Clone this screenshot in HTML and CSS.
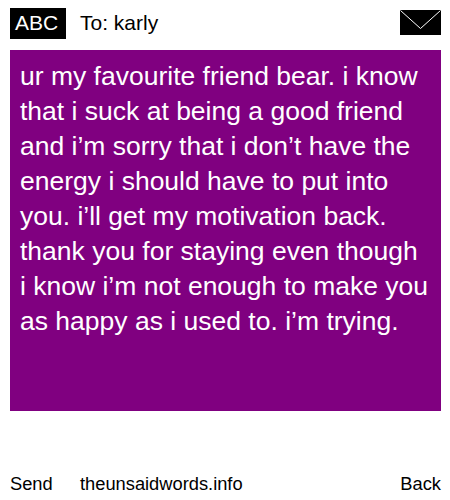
FILE: index.html
```html
<!DOCTYPE html>
<html lang="en">

<head>
  <meta charset="UTF-8" />
  <title>theunsaidwords</title>
  <link rel="stylesheet" href="styles.css">
</head>

<body>
  <div class="header">
    <div class="abc">ABC</div>
    <div class="to">To: karly</div>
    <svg class="envelope" width="41" height="25" viewBox="0 0 41 25">
      <rect width="41" height="25" fill="#000" />
      <path d="M0.5 0.5 L20.5 18.5 L40.5 0.5" fill="none" stroke="#fff" stroke-width="1" />
    </svg>
  </div>
  <div class="message">ur my favourite friend bear. i know that i suck at being a good friend and i’m sorry that i don’t have the energy i should have to put into you. i’ll get my motivation back. thank you for staying even though i know i’m not enough to make you as happy as i used to. i’m trying.</div>
  <div class="footer">
    <div class="send">Send</div>
    <div class="site">theunsaidwords.info</div>
    <div class="back">Back</div>
  </div>
</body>

</html>
```

FILE: styles.css
```css
* {
  padding: 0;
  margin: 0;
  box-sizing: border-box;
}

body {
  width: 450px;
  height: 500px;
  padding: 8px 9px 0 10px;
  font-family: "Liberation Sans", Arial, sans-serif;
  color: #000;
  background-color: #fff;
}

.header {
  display: flex;
  align-items: center;
  height: 31px;
}

.abc {
  width: 56px;
  height: 31px;
  padding-left: 5px;
  color: #fff;
  font-size: 21px;
  line-height: 29px;
  background-color: #000;
}

.to {
  flex: 1;
  margin-left: 14px;
  margin-bottom: 2px;
  font-size: 21px;
}

.envelope {
  display: block;
  margin-bottom: 2px;
}

.message {
  height: 361px;
  margin-top: 11px;
  padding: 9px 10px;
  color: #fff;
  font-size: 26.5px;
  line-height: 35px;
  background-color: #800080;
}

.footer {
  display: flex;
  margin-top: 62px;
  font-size: 18.3px;
  line-height: 22px;
}

.send {
  width: 70px;
}

.site {
  flex: 1;
}
```
